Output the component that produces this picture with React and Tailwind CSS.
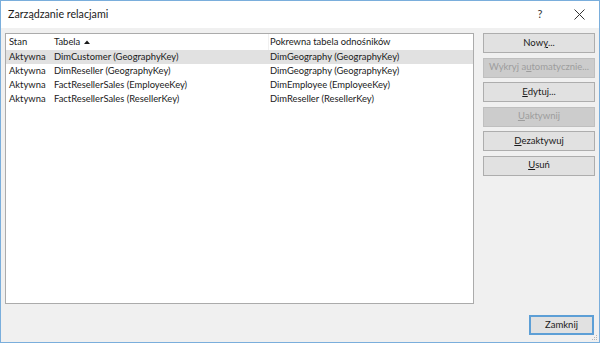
import React from 'react';

const rows = [
    { stan: 'Aktywna', tabela: 'DimCustomer (GeographyKey)', ref: 'DimGeography (GeographyKey)', selected: true },
    { stan: 'Aktywna', tabela: 'DimReseller (GeographyKey)', ref: 'DimGeography (GeographyKey)' },
    { stan: 'Aktywna', tabela: 'FactResellerSales (EmployeeKey)', ref: 'DimEmployee (EmployeeKey)' },
    { stan: 'Aktywna', tabela: 'FactResellerSales (ResellerKey)', ref: 'DimReseller (ResellerKey)' },
];

const SideButton = ({ children, disabled }) => (
    <div
        className={
            'h-[20px] flex items-center justify-center border text-[9.5px] whitespace-nowrap ' +
            (disabled
                ? 'bg-[#cccccc] border-[#bfbfbf] text-[#9d9d9d]'
                : 'bg-[#e1e1e1] border-[#adadad] text-[#1a1a1a]')
        }
    >
        {children}
    </div>
);

const App = () => {
    return (
        <div
            className="w-[600px] h-[343px] bg-[#f0f0f0] border border-[#7aaedc] flex flex-col text-[#1a1a1a] relative overflow-hidden"
            style={{ fontFamily: 'Lato, "Open Sans", sans-serif' }}
        >
            {/* title bar */}
            <div className="h-[27px] bg-white flex items-center shrink-0">
                <div className="pl-[7px] text-[10.7px] flex-1">Zarządzanie relacjami</div>
                <div className="w-[40px] text-center text-[11px] text-[#333]">?</div>
                <div className="w-[39px] flex items-center justify-center">
                    <svg width="11" height="11" viewBox="0 0 11 11">
                        <path d="M0.5 0.5 L10.5 10.5 M10.5 0.5 L0.5 10.5" stroke="#333" strokeWidth="1" />
                    </svg>
                </div>
            </div>

            <div className="flex flex-1 pt-[5px] pl-[4px] pr-[4px]">
                {/* list */}
                <div className="w-[469px] h-[271px] bg-white border border-[#ababab] text-[9.4px]">
                    <div className="flex h-[16px] items-center">
                        <div className="w-[48px] pl-[3px]">Stan</div>
                        <div className="w-[214px] flex items-center gap-[4px]">
                            Tabela
                            <svg width="6" height="4" viewBox="0 0 6 4">
                                <path d="M0 4 L3 0.5 L6 4 Z" fill="#1a1a1a" />
                            </svg>
                        </div>
                        <div className="pl-[1px] border-l border-[#f0f0f0] h-full flex items-center">Pokrewna tabela odnośników</div>
                    </div>
                    {rows.map((r, i) => (
                        <div key={i} className={'flex h-[14px] items-center ' + (r.selected ? 'bg-[#e1e1e1]' : '')}>
                            <div className="w-[48px] pl-[3px]">{r.stan}</div>
                            <div className="w-[214px]">{r.tabela}</div>
                            <div className="pl-[2px]">{r.ref}</div>
                        </div>
                    ))}
                </div>

                {/* buttons */}
                <div className="ml-[9px] w-[112px] flex flex-col gap-[4.5px]">
                    <SideButton>Now<span className="underline">y</span>...</SideButton>
                    <SideButton disabled>Wykryj a<span className="underline">u</span>tomatycznie...</SideButton>
                    <SideButton><span className="underline">E</span>dytuj...</SideButton>
                    <SideButton disabled><span className="underline">U</span>aktywnij</SideButton>
                    <SideButton><span className="underline">D</span>ezaktywuj</SideButton>
                    <SideButton><span className="underline">U</span>suń</SideButton>
                </div>
            </div>

            <div className="flex justify-end pr-[5px] pb-[7px]">
                <div className="w-[65px] h-[20px] bg-[#e1e1e1] border-2 border-[#5d9fd6] flex items-center justify-center text-[9.5px]">
                    Zamknij
                </div>
            </div>

            <svg className="absolute right-[1px] bottom-[1px]" width="8" height="8" viewBox="0 0 8 8">
                <rect x="6" y="2" width="1" height="1" fill="#b5b5b5" />
                <rect x="4" y="4" width="1" height="1" fill="#b5b5b5" />
                <rect x="6" y="4" width="1" height="1" fill="#b5b5b5" />
                <rect x="2" y="6" width="1" height="1" fill="#b5b5b5" />
                <rect x="4" y="6" width="1" height="1" fill="#b5b5b5" />
                <rect x="6" y="6" width="1" height="1" fill="#b5b5b5" />
            </svg>
        </div>
    );
};

export default App;
